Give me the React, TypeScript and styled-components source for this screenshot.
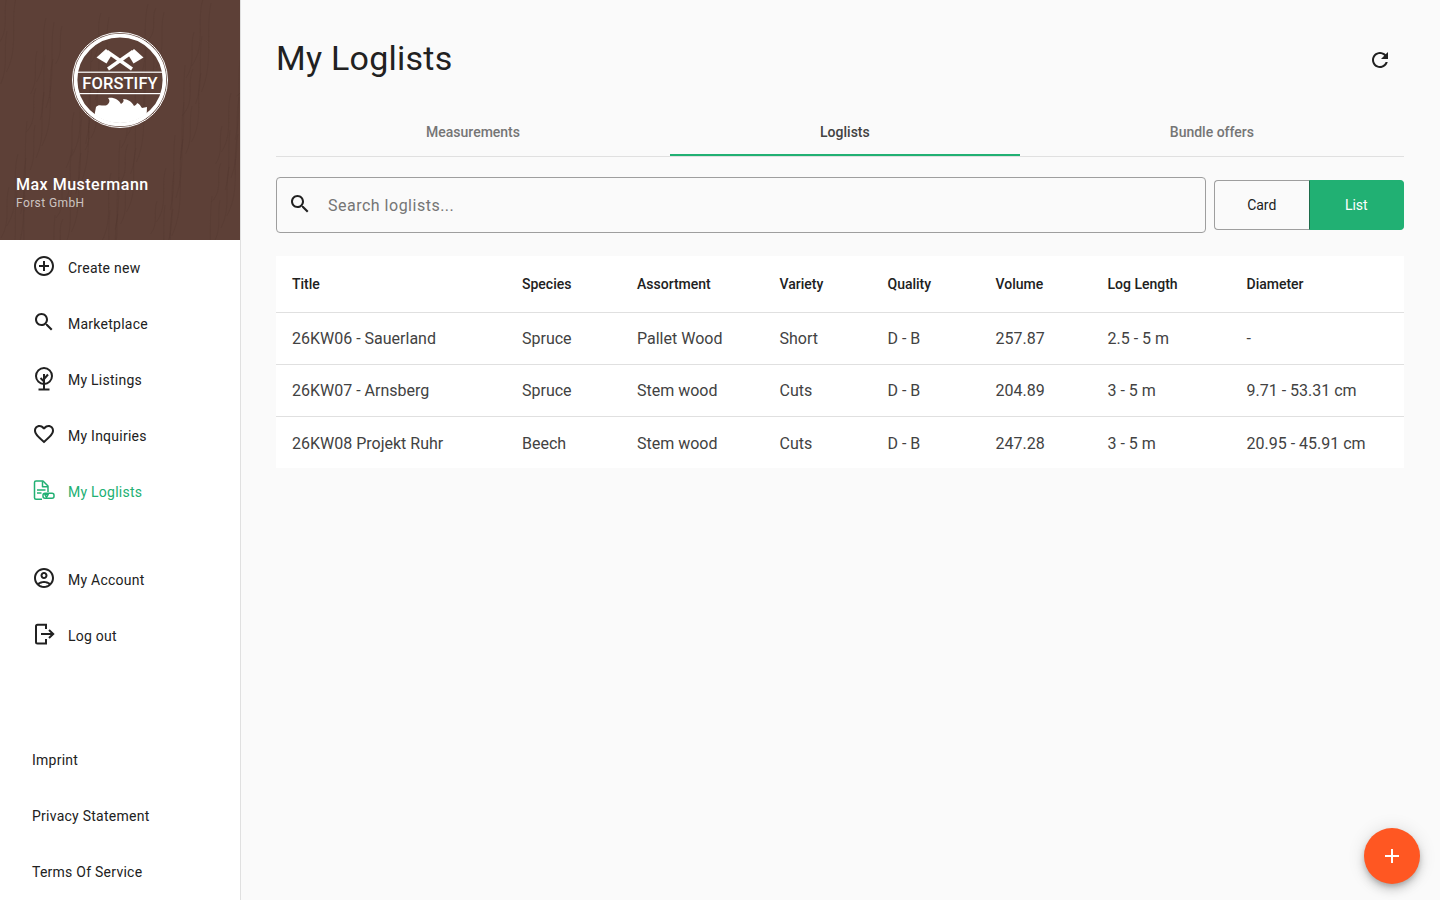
import React from "react";
import styled, { createGlobalStyle } from "styled-components";

const Global = createGlobalStyle`
  html, body { margin: 0; height: 100%; background: #fafafa; }
  body { font-family: Roboto, "Liberation Sans", sans-serif; color: #212121; overflow: hidden; }
  #root { height: 100%; }
  * { box-sizing: border-box; }
`;

const Shell = styled.div`display: flex; height: 900px; width: 1440px;`;
const Sidebar = styled.aside`
  width: 241px; flex: none; height: 100%; background: #fff; border-right: 1px solid #e0e0e0;
  display: flex; flex-direction: column;
`;
const Profile = styled.header`
  position: relative; height: 240px; background: #5d4037; color: #fff; overflow: hidden;
  display: flex; flex-direction: column; align-items: flex-start; padding: 32px 16px 0;
`;
const Grain = styled.svg`position: absolute; inset: 0; width: 100%; height: 100%;`;
const LogoWrap = styled.div`position: relative; width: 96px; height: 96px; align-self: center;`;
const LogoSvg = styled.svg`display: block; width: 96px; height: 96px;`;
const LogoText = styled.span`
  position: absolute; left: 0; right: 0; top: 41.5px; text-align: center; font-size: 16.5px; line-height: 20px;
  font-weight: 500; color: #fff; letter-spacing: 0.1px;
`;
const UserName = styled.div`position: relative; margin-top: 47px; font-size: 16px; line-height: 20px; font-weight: 500; letter-spacing: 0.5px;`;
const Company = styled.div`position: relative; font-size: 12px; line-height: 16px; letter-spacing: 0.4px; color: rgba(255,255,255,.7);`;
const NavGroup = styled.nav<{ $bottom?: boolean }>`
  display: flex; flex-direction: column; margin-top: ${p => (p.$bottom ? "auto" : "0")};
`;
const Spacer = styled.div`height: 32px; flex: none;`;
const NavItem = styled.a<{ $active?: boolean }>`
  height: 56px; display: flex; align-items: center; padding-left: 32px; gap: 12px; font-size: 14px;
  letter-spacing: 0.25px; color: ${p => (p.$active ? "#21b073" : "#212121")};
`;
const NavIcon = styled.svg`width: 24px; height: 24px; flex: none; fill: currentColor; position: relative; top: -2px; overflow: visible;`;
const Outline = styled.g`fill: none; stroke: currentColor; stroke-width: 2px;`;
const ThinOutline = styled.g`fill: none; stroke: currentColor; stroke-width: 1.5px; stroke-linejoin: round;`;
const Main = styled.main`flex: 1; min-width: 0; padding: 0 36px 0 35px; position: relative;`;
const TitleRow = styled.div`height: 98px; display: flex; align-items: center; justify-content: space-between; padding-top: 18px;`;
const PageTitle = styled.h1`margin: 0; font-size: 34px; line-height: 40px; font-weight: 400; letter-spacing: 0.25px; color: #212121;`;
const RefreshIcon = styled.svg`width: 24px; height: 24px; fill: #212121; margin-right: 12px; position: relative; top: 2px;`;
const Tabs = styled.div`display: flex; margin-top: 10px; height: 49px; border-bottom: 1px solid #e0e0e0;`;
const Tab = styled.div<{ $active?: boolean }>`
  flex: 1 1 auto; height: 48px; padding: 2px 150px 0; display: flex; align-items: center; justify-content: center;
  font-size: 14px; font-weight: 500; white-space: nowrap;
  color: ${p => (p.$active ? "#424242" : "#757575")};
  border-bottom: 2px solid ${p => (p.$active ? "#21b073" : "transparent")};
`;
const Controls = styled.div`display: flex; align-items: center; gap: 8px; margin-top: 20px; height: 56px;`;
const Search = styled.div`
  flex: 1; height: 56px; border: 1px solid #9e9e9e; border-radius: 4px; display: flex; align-items: center;
  padding-left: 11px; gap: 14px; background: #fafafa;
`;
const SearchIcon = styled.svg`width: 24px; height: 24px; fill: #212121; flex: none; position: relative; top: -1px;`;
const SearchInput = styled.input`
  border: 0; outline: 0; background: transparent; flex: 1; font: 400 16px Roboto, sans-serif; letter-spacing: 0.5px; color: #212121;
  &::placeholder { color: #757575; opacity: 1; }
`;
const Toggle = styled.div`display: flex; width: 190px; height: 50px; flex: none;`;
const ToggleBtn = styled.button<{ $on?: boolean }>`
  flex: 1; height: 50px; font: 400 14px Roboto, sans-serif; padding: 0;
  border: 1px solid ${p => (p.$on ? "#21b073" : "#9e9e9e")};
  border-left-color: ${p => (p.$on ? "#1c6b4a" : "#9e9e9e")};
  border-right-width: ${p => (p.$on ? "1px" : "0")};
  border-radius: ${p => (p.$on ? "0 4px 4px 0" : "4px 0 0 4px")};
  background: ${p => (p.$on ? "#21b073" : "transparent")}; color: ${p => (p.$on ? "#fff" : "#212121")};
`;
const Table = styled.div`margin-top: 23px; background: #fff;`;
const Row = styled.div<{ $head?: boolean }>`
  display: grid; grid-template-columns: 230px 115px 142.5px 108px 108px 112px 139px 1fr;
  align-items: center; height: ${p => (p.$head ? "57px" : "52px")}; border-bottom: 1px solid #e0e0e0;
  &:last-child { border-bottom: 0; padding-top: 2px; height: 51px; }
  font-size: ${p => (p.$head ? "14px" : "16px")};
  font-weight: ${p => (p.$head ? 500 : 400)};
  color: ${p => (p.$head ? "#212121" : "#424242")};
`;
const Cell = styled.div`padding-left: 16px; white-space: nowrap;`;
const Fab = styled.button`
  position: absolute; right: 20px; bottom: 16px; width: 56px; height: 56px; border-radius: 50%; border: 0; padding: 0;
  background: #ff5722; display: flex; align-items: center; justify-content: center;
  box-shadow: 0 3px 5px -1px rgba(0,0,0,.2), 0 6px 10px 0 rgba(0,0,0,.14), 0 1px 18px 0 rgba(0,0,0,.12);
`;
const FabIcon = styled.svg`width: 24px; height: 24px; fill: #fff;`;

const P = {
  add: "M13 7h-2v4H7v2h4v4h2v-4h4v-2h-4V7zm-1-5C6.48 2 2 6.48 2 12s4.48 10 10 10 10-4.48 10-10S17.52 2 12 2zm0 18c-4.41 0-8-3.59-8-8s3.59-8 8-8 8 3.59 8 8-3.59 8-8 8z",
  search: "M15.5 14h-.79l-.28-.27C15.41 12.59 16 11.11 16 9.5 16 5.91 13.09 3 9.5 3S3 5.91 3 9.5 5.91 16 9.5 16c1.61 0 3.09-.59 4.23-1.57l.27.28v.79l5 4.99L20.49 19l-4.99-5zm-6 0C7.01 14 5 11.99 5 9.5S7.01 5 9.5 5 14 7.01 14 9.5 11.99 14 9.5 14z",
  heart: "M16.5 3c-1.74 0-3.41.81-4.5 2.09C10.91 3.81 9.24 3 7.5 3 4.42 3 2 5.42 2 8.5c0 3.78 3.4 6.86 8.55 11.54L12 21.35l1.45-1.32C18.6 15.36 22 12.28 22 8.5 22 5.42 19.58 3 16.5 3zm-4.4 15.55l-.1.1-.1-.1C7.14 14.24 4 11.39 4 8.5 4 6.5 5.5 5 7.5 5c1.54 0 3.04.99 3.57 2.36h1.87C13.46 5.99 14.96 5 16.5 5c2 0 3.5 1.5 3.5 3.5 0 2.89-3.14 5.74-7.9 10.05z",
  refresh: "M17.65 6.35C16.2 4.9 14.21 4 12 4c-4.42 0-7.99 3.58-7.99 8s3.57 8 7.99 8c3.73 0 6.84-2.55 7.73-6h-2.08c-.82 2.33-3.04 4-5.65 4-3.31 0-6-2.69-6-6s2.69-6 6-6c1.66 0 3.14.69 4.22 1.78L13 11h7V4l-2.35 2.35z",
  account: "M12 2C6.48 2 2 6.48 2 12s4.48 10 10 10 10-4.48 10-10S17.52 2 12 2zM7.35 18.5C8.66 17.56 10.26 17 12 17s3.34.56 4.65 1.5c-1.31.94-2.91 1.5-4.65 1.5s-3.34-.56-4.65-1.5zm10.79-1.38C16.45 15.8 14.32 15 12 15s-4.45.8-6.14 2.12C4.7 15.73 4 13.95 4 12c0-4.42 3.58-8 8-8s8 3.58 8 8c0 1.95-.7 3.73-1.86 5.12zM12 6c-1.93 0-3.5 1.57-3.5 3.5S10.07 13 12 13s3.5-1.57 3.5-3.5S13.93 6 12 6zm0 5c-.83 0-1.5-.67-1.5-1.5S11.17 8 12 8s1.5.67 1.5 1.5S12.83 11 12 11z",
  plus: "M19 13h-6v6h-2v-6H5v-2h6V5h2v6h6v2z",
};

// Deterministic wood grain: short, slightly slanted, low-contrast strokes.
const grain: string[] = [];
for (let i = 0; i < 80; i++) {
  const x = (i * 37) % 250;
  const y = (i * 61) % 230 - 10;
  const len = 30 + (i * 13) % 70;
  const bend = 3 + (i % 5);
  grain.push(`M${x} ${y}c${-bend} ${len / 3} ${bend / 2} ${(len * 2) / 3} ${-bend * 1.6} ${len}`);
}

const Logo = () => (
  <LogoWrap>
    <LogoSvg viewBox="0 0 96 96">
      <defs>
        <clipPath id="inner"><circle cx="48" cy="48" r="43" /></clipPath>
      </defs>
      <circle cx="48" cy="48" r="47.5" fill="none" stroke="#fff" strokeWidth="1" />
      <circle cx="48" cy="48" r="44.4" fill="none" stroke="#fff" strokeWidth="3.6" />
      <g stroke="#fff" strokeWidth="3.4" fill="none">
        <path d="M35 19.5L60 37" />
        <path d="M61 19.5L36 37" />
      </g>
      <path d="M24.5 25.5L34 17L40 22.5L34.5 31.5Z" fill="#fff" />
      <path d="M71.5 25.5L62 17L56 22.5L61.5 31.5Z" fill="#fff" />
      <g clipPath="url(#inner)">
        <rect x="0" y="39.6" width="96" height="1.2" fill="#fff" />
        <rect x="0" y="61" width="96" height="1.2" fill="#fff" />
        <path d="M24 75C27 71 31 75 35 73C38 71 38 68 36 66C42 65 47 68 49 72C52 70 52 68 51 67C56 67 60 70 62 74C64 73 65 72 65 71C68 72 69 75 70 76L75 75L74 96H20Z" fill="#fff" />
      </g>
    </LogoSvg>
    <LogoText>FORSTIFY</LogoText>
  </LogoWrap>
);

const TreeGlyph = () => (
  <Outline>
    <circle cx="12" cy="10" r="8" />
    <path d="M12 23.5V8" />
    <path d="M12 13L16 8.5" />
    <path d="M12 15.5L8.5 12" />
    <path d="M6.5 23.5H17.5" />
  </Outline>
);
const LogoutGlyph = () => (
  <Outline>
    <path d="M14 7V2.8H5.5A1.5 1.5 0 0 0 4 4.3V20A1.5 1.5 0 0 0 5.5 21.5H14V17" />
    <path d="M9 12H21" />
    <path d="M17 8L21.2 12L17 16" />
  </Outline>
);
const DocGlyph = () => (
  <ThinOutline>
    <path d="M10 21.3H4A1.5 1.5 0 0 1 2.5 19.8V4.5A1.5 1.5 0 0 1 4 3H11L16 8V14" />
    <path d="M10.5 3.3V8.8H16" />
    <path d="M5 12H13.5" />
    <path d="M5 15H9.5" />
    <rect x="11" y="15.3" width="11" height="5" rx="2" />
    <path d="M12.8 16.5H16.2L14.5 19.5Z" />
  </ThinOutline>
);

const rows = [
  ["26KW06 - Sauerland", "Spruce", "Pallet Wood", "Short", "D - B", "257.87", "2.5 - 5 m", "-"],
  ["26KW07 - Arnsberg", "Spruce", "Stem wood", "Cuts", "D - B", "204.89", "3 - 5 m", "9.71 - 53.31 cm"],
  ["26KW08 Projekt Ruhr", "Beech", "Stem wood", "Cuts", "D - B", "247.28", "3 - 5 m", "20.95 - 45.91 cm"],
];
const heads = ["Title", "Species", "Assortment", "Variety", "Quality", "Volume", "Log Length", "Diameter"];

const Item = ({ d, label, active, children }: { d?: string; label: string; active?: boolean; children?: React.ReactNode }) => (
  <NavItem $active={active}>
    <NavIcon viewBox="0 0 24 24">{d ? <path d={d} /> : children}</NavIcon>
    {label}
  </NavItem>
);

export default function App() {
  return (
    <>
      <Global />
      <Shell>
        <Sidebar>
          <Profile>
            <Grain viewBox="0 0 240 240" preserveAspectRatio="none">
              {grain.map((d, i) => <path key={i} d={d} fill="none" stroke="#4e342e" strokeWidth="0.6" opacity="0.45" />)}
            </Grain>
            <Logo />
            <UserName>Max Mustermann</UserName>
            <Company>Forst GmbH</Company>
          </Profile>
          <NavGroup>
            <Item d={P.add} label="Create new" />
            <Item d={P.search} label="Marketplace" />
            <Item label="My Listings"><TreeGlyph /></Item>
            <Item d={P.heart} label="My Inquiries" />
            <Item label="My Loglists" active><DocGlyph /></Item>
            <Spacer />
            <Item d={P.account} label="My Account" />
            <Item label="Log out"><LogoutGlyph /></Item>
          </NavGroup>
          <NavGroup $bottom>
            <NavItem>Imprint</NavItem>
            <NavItem>Privacy Statement</NavItem>
            <NavItem>Terms Of Service</NavItem>
          </NavGroup>
        </Sidebar>
        <Main>
          <TitleRow>
            <PageTitle>My Loglists</PageTitle>
            <RefreshIcon viewBox="0 0 24 24"><path d={P.refresh} /></RefreshIcon>
          </TitleRow>
          <Tabs>
            <Tab>Measurements</Tab>
            <Tab $active>Loglists</Tab>
            <Tab>Bundle offers</Tab>
          </Tabs>
          <Controls>
            <Search>
              <SearchIcon viewBox="0 0 24 24"><path d={P.search} /></SearchIcon>
              <SearchInput placeholder="Search loglists..." />
            </Search>
            <Toggle>
              <ToggleBtn>Card</ToggleBtn>
              <ToggleBtn $on>List</ToggleBtn>
            </Toggle>
          </Controls>
          <Table>
            <Row $head>{heads.map(h => <Cell key={h}>{h}</Cell>)}</Row>
            {rows.map(r => <Row key={r[0]}>{r.map((c, i) => <Cell key={i}>{c}</Cell>)}</Row>)}
          </Table>
          <Fab aria-label="Add"><FabIcon viewBox="0 0 24 24"><path d={P.plus} /></FabIcon></Fab>
        </Main>
      </Shell>
    </>
  );
}
